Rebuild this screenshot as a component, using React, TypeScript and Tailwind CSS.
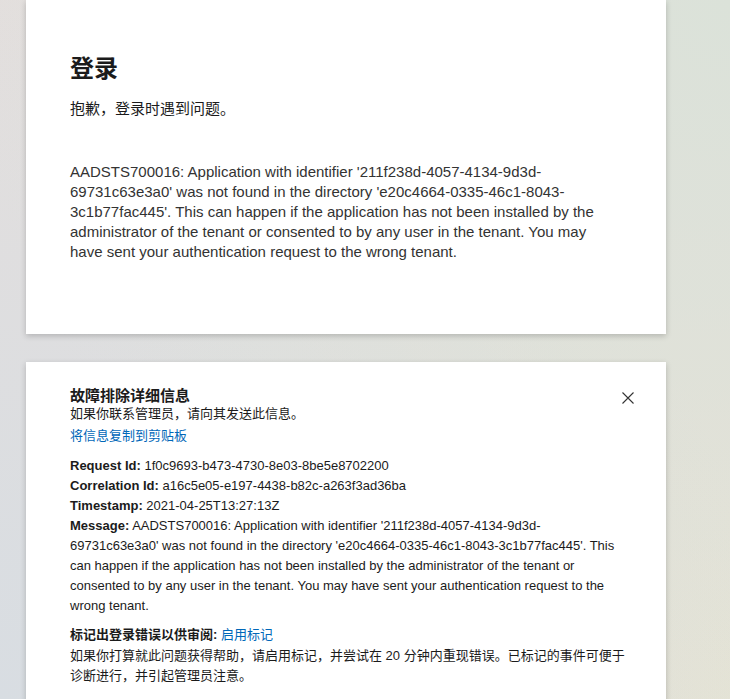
import React from "react";

const latin = "font-['Segoe_UI','Liberation_Sans','Noto_Sans_CJK_SC',sans-serif]";

export default function App() {
  return (
    <div
      className={`h-screen overflow-hidden bg-[#e4dfdd] bg-[radial-gradient(circle_at_100%_0%,#dbe2d9_0%,rgba(219,226,217,0)_75%),radial-gradient(circle_at_0%_100%,#d8dde2_0%,rgba(216,221,226,0)_75%),radial-gradient(circle_at_100%_100%,#e5e3d5_0%,rgba(229,227,213,0)_70%)] ${latin} text-[#1b1b1b]`}
    >
      <div className="ml-[26px] w-[640px] flex flex-col gap-[28px]">
        <div className="bg-white shadow-[0_2px_6px_rgba(0,0,0,0.2)] px-[44px] pt-[55px] pb-[72px]">
          <h1 className="text-[24px] leading-[28px] font-semibold">登录</h1>
          <p className="mt-[16px] text-[15px] leading-[20px]">抱歉，登录时遇到问题。</p>
          <p className="mt-[43px] text-[15px] leading-[20px] text-[#333]">
            AADSTS700016: Application with identifier '211f238d-4057-4134-9d3d-69731c63e3a0' was not found in the directory 'e20c4664-0335-46c1-8043-3c1b77fac445'. This can happen if the application has not been installed by the administrator of the tenant or consented to by any user in the tenant. You may have sent your authentication request to the wrong tenant.
          </p>
        </div>
        <div className="relative bg-white shadow-[0_2px_6px_rgba(0,0,0,0.2)] pl-[44px] pr-[40px] pt-[25px] pb-[40px] text-[13px] leading-[20px]">
          <button className="absolute right-[30px] top-[28px] w-[16px] h-[16px] flex items-center justify-center" aria-label="close">
            <svg width="12" height="12" viewBox="0 0 12 12">
              <path d="M0.5 0.5L11.5 11.5M11.5 0.5L0.5 11.5" stroke="#333" strokeWidth="1.1" fill="none" />
            </svg>
          </button>
          <div className="text-[15px] leading-[18px] font-semibold">故障排除详细信息</div>
          <div className="leading-[18px]">如果你联系管理员，请向其发送此信息。</div>
          <div className="mt-[3px] text-[#0067b8]">将信息复制到剪贴板</div>
          <div className="mt-[10px]">
            <div><span className="font-semibold">Request Id:</span> 1f0c9693-b473-4730-8e03-8be5e8702200</div>
            <div><span className="font-semibold">Correlation Id:</span> a16c5e05-e197-4438-b82c-a263f3ad36ba</div>
            <div><span className="font-semibold">Timestamp:</span> 2021-04-25T13:27:13Z</div>
            <div>
              <span className="font-semibold">Message:</span> AADSTS700016: Application with identifier '211f238d-4057-4134-9d3d-69731c63e3a0' was not found in the directory 'e20c4664-0335-46c1-8043-3c1b77fac445'. This can happen if the application has not been installed by the administrator of the tenant or consented to by any user in the tenant. You may have sent your authentication request to the wrong tenant.
            </div>
          </div>
          <div className="mt-[9px]">
            <div>
              <span className="font-semibold">标记出登录错误以供审阅:</span> <span className="text-[#0067b8]">启用标记</span>
            </div>
            <div className="mt-[1px]">如果你打算就此问题获得帮助，请启用标记，并尝试在 20 分钟内重现错误。已标记的事件可便于诊断进行，并引起管理员注意。</div>
          </div>
        </div>
      </div>
    </div>
  );
}
